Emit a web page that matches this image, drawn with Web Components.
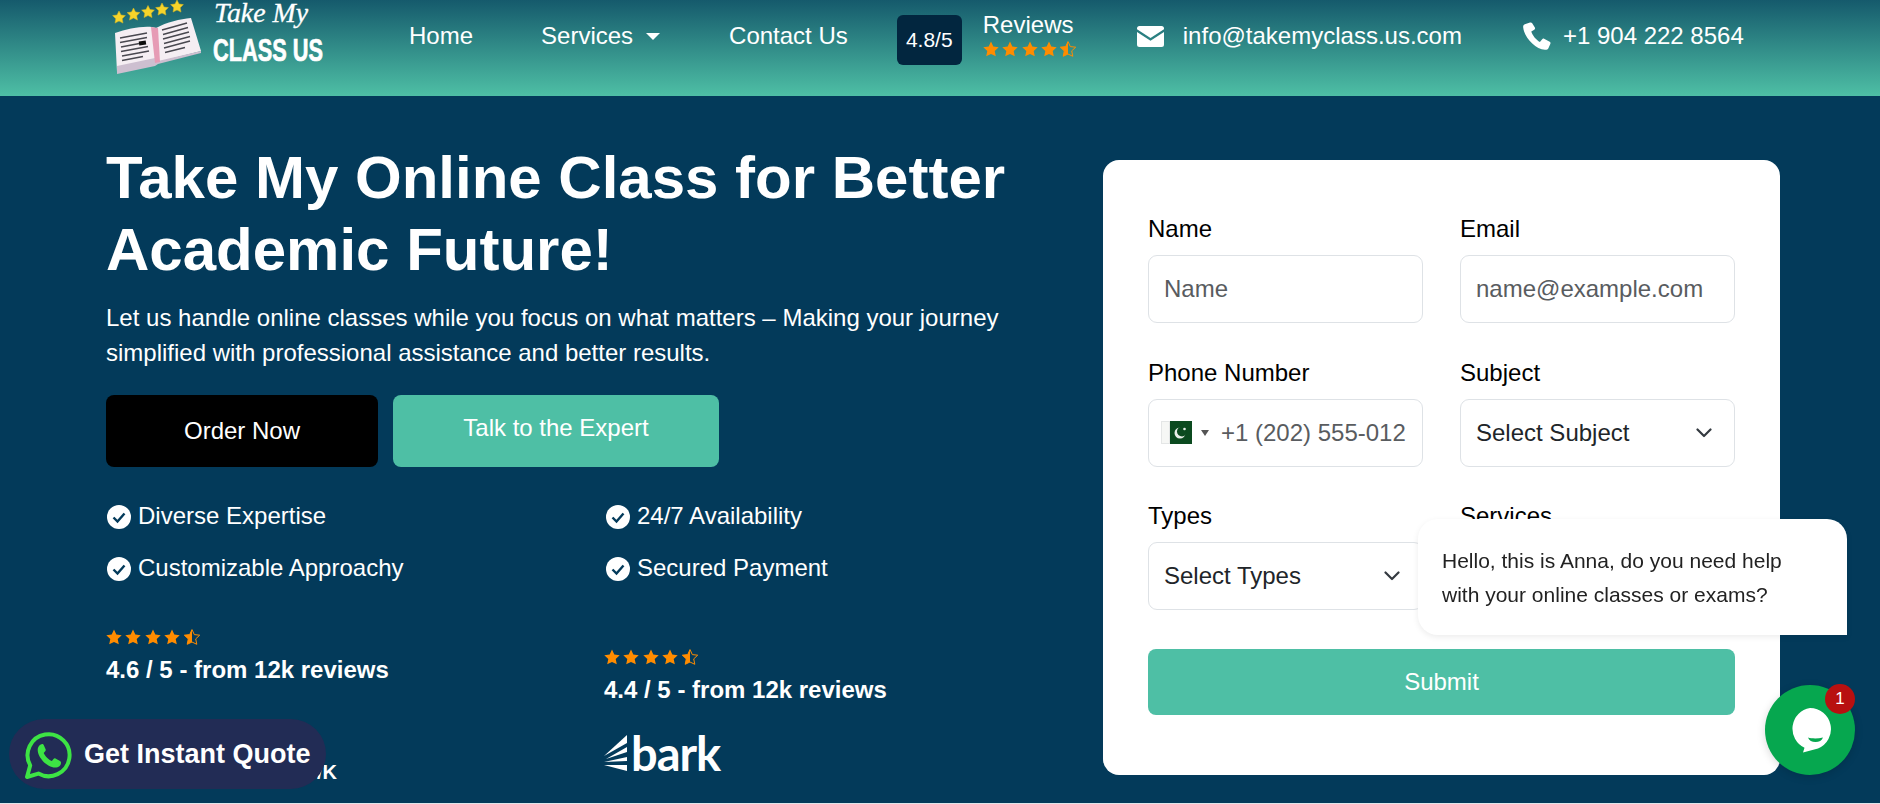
<!DOCTYPE html>
<html lang="en">
<head>
<meta charset="utf-8">
<title>Take My Class US</title>
<style>
  html, body { margin: 0; padding: 0; }
  body {
    width: 1880px;
    height: 804px;
    overflow: hidden;
    background: #dfe6ea;
    font-family: "Liberation Sans", Arial, sans-serif;
  }
</style>
</head>
<body>
<site-header></site-header>
<hero-section>
  <hero-pitch slot="pitch"></hero-pitch>
  <quote-form slot="form"></quote-form>
</hero-section>
<quote-pill></quote-pill>
<chat-widget></chat-widget>

<script>
const STAR = "M8 0.6l2.3 5 5.4 0.6-4 3.7 1.1 5.4L8 13l-4.8 2.3 1.1-5.4-4-3.7 5.4-0.6z";

class StarRow extends HTMLElement {
  connectedCallback() {
    const gap = this.getAttribute("gap") || "3.4";
    const star = `<svg width="16" height="16" viewBox="0 0 16 16"><path d="${STAR}" fill="#ff8c00"/></svg>`;
    const half = `<svg width="16" height="16" viewBox="0 0 16 16">
      <path d="${STAR}" fill="none" stroke="#ff8c00" stroke-width="1"/>
      <path d="M8 0.6V13l-4.8 2.3 1.1-5.4-4-3.7 5.4-0.6z" fill="#ff8c00"/></svg>`;
    this.attachShadow({ mode: "open" }).innerHTML = `
      <style>
        :host { display: flex; gap: ${gap}px; }
        svg { display: block; }
      </style>
      ${star.repeat(4)}${half}`;
  }
}
customElements.define("star-row", StarRow);

class SiteHeader extends HTMLElement {
  constructor() {
    super();
    this.attachShadow({ mode: "open" }).innerHTML = `
      <style>
        :host {
          display: flex;
          height: 96px;
          padding-left: 113px;
          box-sizing: border-box;
          background: linear-gradient(#155a6c, #4ebfa5);
          color: #fff;
          font-size: 24px;
          overflow: hidden;
        }
        .logo { width: 212px; height: 80px; display: block; flex: none; overflow: visible; }
        nav { display: flex; margin-left: 84px; height: 72px; align-items: center; }
        nav a { white-space: nowrap; }
        .services { margin-left: 68px; display: flex; align-items: center; gap: 13px; }
        .services i { border: 7px solid transparent; border-top-color: #fff; border-bottom: 0; }
        .contact { margin-left: 69px; }
        .badge {
          margin: 15px 0 0 49px;
          width: 65px;
          height: 50px;
          flex: none;
          background: #02263f;
          border-radius: 6px;
          font-size: 21px;
          display: flex;
          align-items: center;
          justify-content: center;
        }
        .reviews { margin: 10px 0 0 21px; width: 154px; flex: none; }
        .reviews span { display: block; line-height: 30px; }
        star-row { margin-top: 1px; }
        .contact-item { display: flex; align-items: center; height: 72px; white-space: nowrap; }
        .contact-item svg { display: block; flex: none; }
        .mail { gap: 19px; }
        .phone { gap: 12px; margin-left: 61px; }
      </style>
      <svg class="logo" viewBox="113 0 212 80">
        <defs><filter id="soft"><feGaussianBlur stdDeviation="0.6"/></filter></defs>
        <g filter="url(#soft)">
          <g fill="#f6d42c" stroke="#d9b81e" stroke-width="0.5">
            <path id="s" d="M119 11l2 4 4.400 0.600-3.200 3.100 0.800 4.400-4-2.100-4 2.100 0.800-4.400-3.200-3.100 4.400-0.600z"/>
            <use href="#s" x="14.500" y="-3"/>
            <use href="#s" x="29" y="-5.500"/>
            <use href="#s" x="43" y="-8"/>
            <use href="#s" x="58" y="-11"/>
          </g>
          <path d="M115 33c12-4 25-7 37-6l4 1c11-6 24-9 35-10l10 33-43 11-3 2-38 8z" fill="#f5eef3"/>
          <path d="M117 66l38-8 3 3 43-10v2l-43 11-3 2-38 8z" fill="#cdbfd0"/>
          <path d="M151 27l7 1 2 34-5 1z" fill="#e69bb5"/>
          <g stroke="#2b2b33" stroke-width="1.400" fill="none" opacity=".85">
            <path d="M120 38l27-5M120 42.500l27-5M121 47l21-4M121 51.500l27-5M122 56l27-5M122 60.500l21-4"/>
            <path d="M162 30l25-7M163 34.500l25-7M163 39l26-7M164 43.500l26-7M164 48l26-7M165 52.500l20-5"/>
          </g>
          <rect x="139" y="41" width="7" height="4" fill="#111" transform="rotate(-8 142 43)"/>
        </g>
        <text x="214" y="22" font-family="'Liberation Serif', serif" font-style="italic" font-size="27" fill="#fff"
              stroke="#fff" stroke-width="0.3" textLength="94" lengthAdjust="spacingAndGlyphs">Take My</text>
        <text x="213" y="61" font-family="'Liberation Sans', sans-serif" font-weight="700" font-size="32" fill="#fff"
              stroke="#fff" stroke-width="0.7" textLength="110" lengthAdjust="spacingAndGlyphs">CLASS US</text>
      </svg>
      <nav>
        <a>Home</a>
        <a class="services">Services <i></i></a>
        <a class="contact">Contact Us</a>
      </nav>
      <div class="badge">4.8/5</div>
      <div class="reviews">
        <span>Reviews</span>
        <star-row></star-row>
      </div>
      <div class="contact-item mail">
        <svg width="27" height="21" viewBox="0 0 27 21">
          <path d="M2.500 0h22A2.500 2.500 0 0 1 27 2.500v.8L13.500 12 0 3.300v-.8A2.500 2.500 0 0 1 2.500 0z" fill="#fff"/>
          <path d="M0 6l13.500 8.700L27 6v12.500a2.500 2.500 0 0 1-2.500 2.500h-22A2.500 2.500 0 0 1 0 18.500z" fill="#fff"/>
        </svg>
        <span>info@takemyclass.us.com</span>
      </div>
      <div class="contact-item phone">
        <svg width="28" height="28" viewBox="0 0 28 28">
          <path d="M7 .5L1.800 2.200C.4 2.800 0 4 .2 5.600 1.200 15 12 27 22 27.800c1.600.1 2.900-.5 3.400-1.600l2-4.500c.3-.8 0-1.500-.7-1.900l-5.600-3c-.7-.4-1.400-.2-1.900.4l-2.300 2.900C13.400 18.400 9 13 8.300 9.600l3-1.900c.7-.4.900-1.100.7-1.900L9.200 1.200C8.800.5 7.900.2 7 .5z" fill="#fff"/>
        </svg>
        <span>+1 904 222 8564</span>
      </div>`;
  }
}
customElements.define("site-header", SiteHeader);

class HeroSection extends HTMLElement {
  constructor() {
    super();
    this.attachShadow({ mode: "open" }).innerHTML = `
      <style>
        :host {
          display: flex;
          height: 707px;
          box-sizing: border-box;
          padding-left: 106px;
          background: #033a5a;
          overflow: hidden;
        }
        ::slotted([slot="pitch"]) { width: 997px; flex: none; }
        ::slotted([slot="form"]) { width: 677px; flex: none; margin-top: 64px; }
      </style>
      <slot name="pitch"></slot>
      <slot name="form"></slot>`;
  }
}
customElements.define("hero-section", HeroSection);

class CheckItem extends HTMLElement {
  constructor() {
    super();
    this.attachShadow({ mode: "open" }).innerHTML = `
      <style>
        :host { display: flex; align-items: center; gap: 6px; height: 30px; font-size: 24px; color: #fff; }
        svg { display: block; flex: none; margin-top: 2px; }
      </style>
      <svg width="26" height="26" viewBox="0 0 26 26">
        <circle cx="13" cy="13" r="12" fill="#fff"/>
        <path d="M7.500 13.500l4 4 7-8" fill="none" stroke="#033a5a" stroke-width="2.400"/>
      </svg>
      <slot></slot>`;
  }
}
customElements.define("check-item", CheckItem);

class RatingBlock extends HTMLElement {
  constructor() {
    super();
    this.attachShadow({ mode: "open" }).innerHTML = `
      <style>
        :host { display: block; color: #fff; }
        b { display: block; font-size: 24px; line-height: 30px; margin-top: 10px; white-space: nowrap; }
        .logo { height: 40px; margin-top: 41px; }
      </style>
      <star-row></star-row>
      <b><slot></slot></b>
      <div class="logo"><slot name="logo"></slot></div>`;
  }
}
customElements.define("rating-block", RatingBlock);

class BarkLogo extends HTMLElement {
  constructor() {
    super();
    this.attachShadow({ mode: "open" }).innerHTML = `
      <style>
        :host { display: flex; align-items: center; gap: 3px; margin-top: -12px; }
        svg { display: block; flex: none; }
        span { font-family: "Lato", sans-serif; font-weight: 700; font-size: 47px; line-height: 38px; letter-spacing: -1px; }
      </style>
      <svg width="24" height="37" viewBox="0 0 24 37">
        <path d="M23 0v8L0 21z" fill="#fff"/>
        <path d="M23 12v5L2 24z" fill="#fff"/>
        <path d="M23 22v4L0 27z" fill="#fff"/>
        <path d="M0 30h23v6z" fill="#fff"/>
      </svg>
      <span>bark</span>`;
  }
}
customElements.define("bark-logo", BarkLogo);

class HeroPitch extends HTMLElement {
  constructor() {
    super();
    this.attachShadow({ mode: "open" }).innerHTML = `
      <style>
        :host { display: block; color: #fff; }
        h1 { margin: 46px 0 0; font-size: 60px; line-height: 72px; font-weight: 700; white-space: nowrap; }
        p { margin: 14px 0 0; font-size: 24px; line-height: 35px; white-space: nowrap; }
        .actions { display: flex; gap: 15px; margin-top: 25px; }
        .btn {
          height: 72px;
          border-radius: 8px;
          display: flex;
          justify-content: center;
          align-items: center;
          font-size: 24px;
          box-sizing: border-box;
        }
        .order { width: 272px; background: #000; }
        .talk { width: 326px; background: #4ebfa5; padding-bottom: 6px; }
        .checks { display: grid; grid-template-columns: 499px 1fr; row-gap: 22px; margin-top: 34px; }
        .ratings { display: grid; grid-template-columns: 498px 1fr; margin-top: 46px; }
        .second { margin-top: 20px; }
        .wordmark { display: block; font-size: 20px; font-weight: 700; margin-left: 211px; padding-top: 35px; }
      </style>
      <h1>Take My Online Class for Better<br>Academic Future!</h1>
      <p>Let us handle online classes while you focus on what matters – Making your journey<br>simplified with professional assistance and better results.</p>
      <div class="actions">
        <div class="btn order">Order Now</div>
        <div class="btn talk">Talk to the Expert</div>
      </div>
      <div class="checks">
        <check-item>Diverse Expertise</check-item>
        <check-item>24/7 Availability</check-item>
        <check-item>Customizable Approachy</check-item>
        <check-item>Secured Payment</check-item>
      </div>
      <div class="ratings">
        <rating-block>4.6 / 5 - from 12k reviews
          <span slot="logo" class="wordmark">/K</span>
        </rating-block>
        <rating-block class="second">4.4 / 5 - from 12k reviews
          <bark-logo slot="logo"></bark-logo>
        </rating-block>
      </div>`;
  }
}
customElements.define("hero-pitch", HeroPitch);

class FormField extends HTMLElement {
  constructor() {
    super();
    this.attachShadow({ mode: "open" }).innerHTML = `
      <style>
        :host { display: block; font-size: 24px; color: #000; min-width: 0; }
        label { display: block; height: 30px; line-height: 30px; margin-bottom: 11px; }
        .control {
          height: 68px;
          box-sizing: border-box;
          border: 1px solid #dee2e6;
          border-radius: 9px;
          background: #fff;
          display: flex;
          align-items: center;
          padding: 0 15px;
          font-size: 24px;
          white-space: nowrap;
          overflow: hidden;
          color: #595c5f;
          gap: 8px;
        }
        :host([select]) .control { color: #212529; justify-content: space-between; padding-right: 22px; }
        .chev { display: none; flex: none; }
        :host([select]) .chev { display: block; }
      </style>
      <label></label>
      <div class="control">
        <slot></slot>
        <svg class="chev" width="16" height="10" viewBox="0 0 16 10">
          <path d="M1.500 1.500L8 8l6.500-6.500" fill="none" stroke="#343a40" stroke-width="2.200" stroke-linecap="round" stroke-linejoin="round"/>
        </svg>
      </div>`;
  }
  connectedCallback() {
    this.shadowRoot.querySelector("label").textContent = this.getAttribute("label");
  }
}
customElements.define("form-field", FormField);

class QuoteForm extends HTMLElement {
  constructor() {
    super();
    this.attachShadow({ mode: "open" }).innerHTML = `
      <style>
        :host {
          display: block;
          box-sizing: border-box;
          height: 615px;
          padding: 54px 45px 0 45px;
          background: #fff;
          border-radius: 16px;
        }
        .grid { display: grid; grid-template-columns: 275px 275px; column-gap: 37px; row-gap: 34.500px; }
        .submit {
          margin-top: 39px;
          height: 66px;
          background: #4ebfa5;
          border-radius: 8px;
          color: #fff;
          font-size: 24px;
          display: flex;
          align-items: center;
          justify-content: center;
        }
        .flag { display: block; width: 31px; height: 23px; flex: none; }
        .caret { width: 0; height: 0; border: 4.500px solid transparent; border-top: 6px solid #555; border-bottom: 0; margin: 0 6px 0 9px; flex: none; }
        .phone { display: flex; align-items: center; margin-left: -3px; }
        .phone span { color: #595c5f; margin-left: 6px; }
      </style>
      <div class="grid">
        <form-field label="Name">Name</form-field>
        <form-field label="Email">name@example.com</form-field>
        <form-field label="Phone Number">
          <div class="phone">
            <svg class="flag" viewBox="0 0 31 23">
              <rect width="31" height="23" fill="#0b4a1f"/>
              <rect x=".5" y=".5" width="8" height="22" fill="#f6f7f5" stroke="#e4e6e6"/>
              <circle cx="19" cy="12" r="5.500" fill="#e8efe8"/>
              <circle cx="21" cy="10.500" r="5" fill="#0b4a1f"/>
              <circle cx="23.500" cy="8" r="1.300" fill="#e8efe8"/>
            </svg>
            <i class="caret"></i>
            <span>+1 (202) 555-012</span>
          </div>
        </form-field>
        <form-field label="Subject" select>Select Subject</form-field>
        <form-field label="Types" select>Select Types</form-field>
        <form-field label="Services" select>Select Services</form-field>
      </div>
      <div class="submit">Submit</div>`;
  }
}
customElements.define("quote-form", QuoteForm);

class QuotePill extends HTMLElement {
  constructor() {
    super();
    this.attachShadow({ mode: "open" }).innerHTML = `
      <style>
        :host {
          position: fixed;
          left: 9px;
          top: 719px;
          width: 317px;
          height: 70px;
          box-sizing: border-box;
          padding-left: 15px;
          border-radius: 35px;
          background: #222c55;
          color: #fff;
          display: flex;
          align-items: center;
          gap: 12px;
          font-size: 27px;
          font-weight: 700;
          white-space: nowrap;
        }
        svg { display: block; flex: none; margin-top: 3px; }
      </style>
      <svg width="48" height="48" viewBox="0 0 48 48">
        <path d="M3 45l3.200-11.600A21 21 0 1 1 14.400 41.600z" fill="none" stroke="#3de444" stroke-width="4" stroke-linejoin="round"/>
        <path d="M17.500 12.500c-1.500 0-3.800 2-3.800 5.500 0 7 9 17.500 17.500 17.500 3.500 0 5.800-2.400 5.800-4.600 0-1-.2-1.500-1-2l-4.500-2.400c-.8-.4-1.400-.2-2 .5l-1.600 2c-3.300-1.200-6.700-4.700-8.200-8l1.500-1.700c.6-.7.700-1.200.4-2l-2-4.500c-.4-.9-1-.9-2.100-.8z" fill="#3de444"/>
      </svg>
      <span>Get Instant Quote</span>`;
  }
}
customElements.define("quote-pill", QuotePill);

class ChatWidget extends HTMLElement {
  constructor() {
    super();
    this.attachShadow({ mode: "open" }).innerHTML = `
      <style>
        :host { font-size: 21px; }
        .bubble {
          position: fixed;
          left: 1418px;
          top: 519px;
          width: 429px;
          height: 116px;
          box-sizing: border-box;
          padding: 25px 0 0 24px;
          background: #fff;
          color: #222;
          line-height: 34px;
          white-space: nowrap;
          border-radius: 20px 20px 0 20px;
          box-shadow: 0 2px 6px rgba(0, 0, 0, .08);
        }
        .launcher {
          position: fixed;
          left: 1765px;
          top: 685px;
          width: 90px;
          height: 90px;
          border-radius: 50%;
          background: #06a74f;
          box-shadow: 0 2px 8px rgba(0, 0, 0, .15);
        }
        .launcher svg { position: absolute; left: 24px; top: 22px; display: block; }
        .count {
          position: fixed;
          left: 1825px;
          top: 684px;
          width: 30px;
          height: 30px;
          border-radius: 50%;
          background: #b81010;
          color: #fff;
          font-size: 17px;
          line-height: 30px;
          text-align: center;
        }
      </style>
      <div class="bubble">Hello, this is Anna, do you need help<br>with your online classes or exams?</div>
      <div class="launcher">
        <svg width="44" height="46" viewBox="0 0 44 46">
          <path d="M21 1a21 21 0 0 1 8 40.400L14 45.500l1.500-4.800A21 21 0 0 1 21 1z" fill="#fff"/>
          <path d="M19 30.500c4 1.200 10 1.200 15 0-1 3-4 4.500-7.500 4.500s-6.500-1.500-7.500-4.500z" fill="#06a74f"/>
        </svg>
      </div>
      <div class="count">1</div>`;
  }
}
customElements.define("chat-widget", ChatWidget);
</script>
</body>
</html>
